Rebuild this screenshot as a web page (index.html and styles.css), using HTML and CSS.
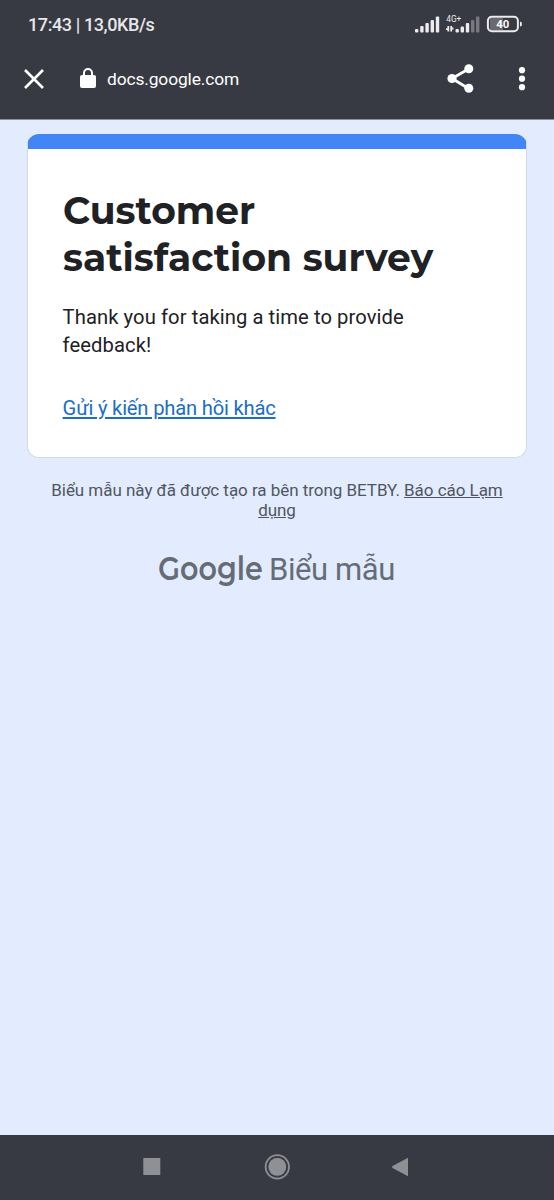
FILE: index.html
```html
<!DOCTYPE html>
<html lang="vi">
<head>
<meta charset="utf-8">
<title>Customer satisfaction survey</title>
<link rel="stylesheet" href="styles.css">
</head>
<body>
<header class="chrome">
  <div class="status">
    <span class="clock">17:43 | 13,0KB/s</span>
    <svg class="signals" width="110" height="24" viewBox="0 0 110 24">
      <g fill="#ececee">
        <rect x="1" y="17" width="3.4" height="3.4" rx="1"/><rect x="6.2" y="14" width="3.4" height="6.4" rx="1"/><rect x="11.4" y="11" width="3.4" height="9.4" rx="1"/><rect x="16.6" y="8" width="3.4" height="12.4" rx="1"/><rect x="21.8" y="4.5" width="3.4" height="15.9" rx="1"/>
        <rect x="41.5" y="17" width="3.4" height="3.4" rx="1"/><rect x="46.6" y="14.5" width="3.4" height="5.9" rx="1"/><rect x="51.8" y="11" width="3.4" height="9.4" rx="1"/>
      </g>
      <g fill="#77797f"><rect x="57" y="8" width="3.4" height="12.4" rx="1"/><rect x="62" y="4.5" width="3.4" height="15.9" rx="1"/></g>
      <path d="M34.3 14v5.500M32 17.200h2M37.200 19.500v-5.500M37.200 16.500h2.300" stroke="#ececee" stroke-width="1.800" fill="none"/>
      <text class="net" x="32.300" y="9.600" textLength="15" lengthAdjust="spacingAndGlyphs">4G+</text>
      <rect x="76" y="6" width="13" height="12" fill="#686a70"/>
      <rect x="73.900" y="4.800" width="30" height="14.400" rx="4" fill="none" stroke="#ececee" stroke-width="2"/>
      <path d="M106 9.500q2 0 2 2.500t-2 2.500z" fill="#ececee"/>
      <text class="charge" x="82.300" y="16.200" textLength="13" lengthAdjust="spacingAndGlyphs">40</text>
    </svg>
  </div>
  <div class="toolbar">
    <svg class="close" width="22" height="22" viewBox="0 0 22 22"><path d="M2 2l18 18M20 2L2 20" stroke="#fff" stroke-width="2.600"/></svg>
    <svg class="lock" width="16" height="22" viewBox="0 0 16 22"><path d="M4 9V5a4 4 0 0 1 8 0V9" fill="none" stroke="#fff" stroke-width="2"/><rect x="0" y="7" width="16" height="13" rx="2" fill="#fff"/></svg>
    <span class="host">docs.google.com</span>
    <svg class="share" width="28" height="30" viewBox="0 0 28 30"><path d="M21.500 5L5 14.500l16.500 10" fill="none" stroke="#fff" stroke-width="2.800"/><g fill="#fff"><circle cx="5" cy="14.500" r="4.600"/><circle cx="21.800" cy="4.800" r="4.500"/><circle cx="21.800" cy="24.300" r="4.500"/></g></svg>
    <svg class="more" width="8" height="26" viewBox="0 0 8 26"><g fill="#fff"><circle cx="4" cy="4.200" r="3.100"/><circle cx="4" cy="12.700" r="3.100"/><circle cx="4" cy="21.200" r="3.100"/></g></svg>
  </div>
</header>
<main class="page">
  <section class="card">
    <h1 class="title">Customer<br>satisfaction survey</h1>
    <p class="message">Thank you for taking a time to provide feedback!</p>
    <a class="again">Gửi ý kiến phản hồi khác</a>
  </section>
  <p class="notice">Biểu mẫu này đã được tạo ra bên trong BETBY. <a class="report">Báo cáo Lạm<br>dụng</a></p>
  <div class="brand"><span class="google">Google</span><span class="forms">Biểu mẫu</span></div>
</main>
<nav class="nav">
  <svg width="554" height="65" viewBox="0 0 554 65" fill="#8f9094">
    <rect x="143.300" y="23" width="17" height="17" rx=".6"/>
    <circle cx="277.300" cy="31.800" r="9"/><circle cx="277.300" cy="31.800" r="11.700" fill="none" stroke="#8f9094" stroke-width="1.800"/>
    <path d="M408 22.800v18.400l-15.500-8.200q-1-1 0-2z"/>
  </svg>
</nav>
</body>
</html>
```
FILE: styles.css
```css
body {
  margin: 0;
  height: 1200px;
  display: flex;
  flex-direction: column;
  background: #e3ecfe;
  font-family: Roboto, "Noto Sans", sans-serif;
  color: #202124;
}
.chrome {
  height: 119px;
  background: #373a42;
  border-bottom: 1px solid #8b9099;
  color: #fff;
}
.status {
  display: flex;
  height: 48px;
  justify-content: space-between;
  align-items: center;
  padding: 0 30px 0 28px;
}
.clock { font-size: 18px; letter-spacing: -.4px; font-weight: 500; color: #e6e7e9; }
.net { font: 9px Roboto, sans-serif; fill: #ececee; }
.charge { font: 700 11.5px Roboto, sans-serif; fill: #fff; }
.toolbar {
  display: flex;
  height: 61px;
  align-items: center;
  padding: 0 28px 0 23px;
}
.lock { margin-left: 35px; }
.host { margin-left: 11px; font-size: 17.4px; letter-spacing: -.13px; padding-top: 1px; }
.share { margin-left: auto; }
.more { margin-left: 43px; }
.page { flex: 1; }
.card {
  box-sizing: border-box;
  width: 500px;
  height: 324px;
  margin: 14px 0 0 27px;
  padding: 38px 35px 0;
  background: #fff;
  border: 1px solid #d2daea;
  border-top: 15px solid #4285f4;
  border-radius: 12px;
}
.title { margin: 0; font: 700 37.6px/47px Montserrat, Inter, sans-serif; white-space: nowrap; }
.message { margin: 22px 0 0 -.4px; font-size: 20.2px; line-height: 28px; letter-spacing: .08px; }
.again {
  display: block;
  margin: 36px 0 0 -.4px;
  font-size: 20.2px;
  letter-spacing: -.2px;
  line-height: 26px;
  color: #1a6fc4;
  text-decoration: underline;
}
.notice {
  margin: 22px 0 0;
  text-align: center;
  font-size: 17px;
  letter-spacing: -.04px;
  line-height: 20px;
  color: #4f5661;
}
.report { text-decoration: underline; }
.brand {
  display: flex;
  align-items: baseline;
  margin: 28px 0 0 158px;
  color: #666c76;
  line-height: 40px;
  white-space: nowrap;
}
.google {
  width: 111px;
  font: 600 34px/40px Montserrat, Lato, sans-serif;
  transform: scaleX(.84);
  transform-origin: left;
}
.forms { font-size: 31px; letter-spacing: -.4px; }
.nav { height: 65px; background: #373a42; }
.nav svg { display: block; }
```
